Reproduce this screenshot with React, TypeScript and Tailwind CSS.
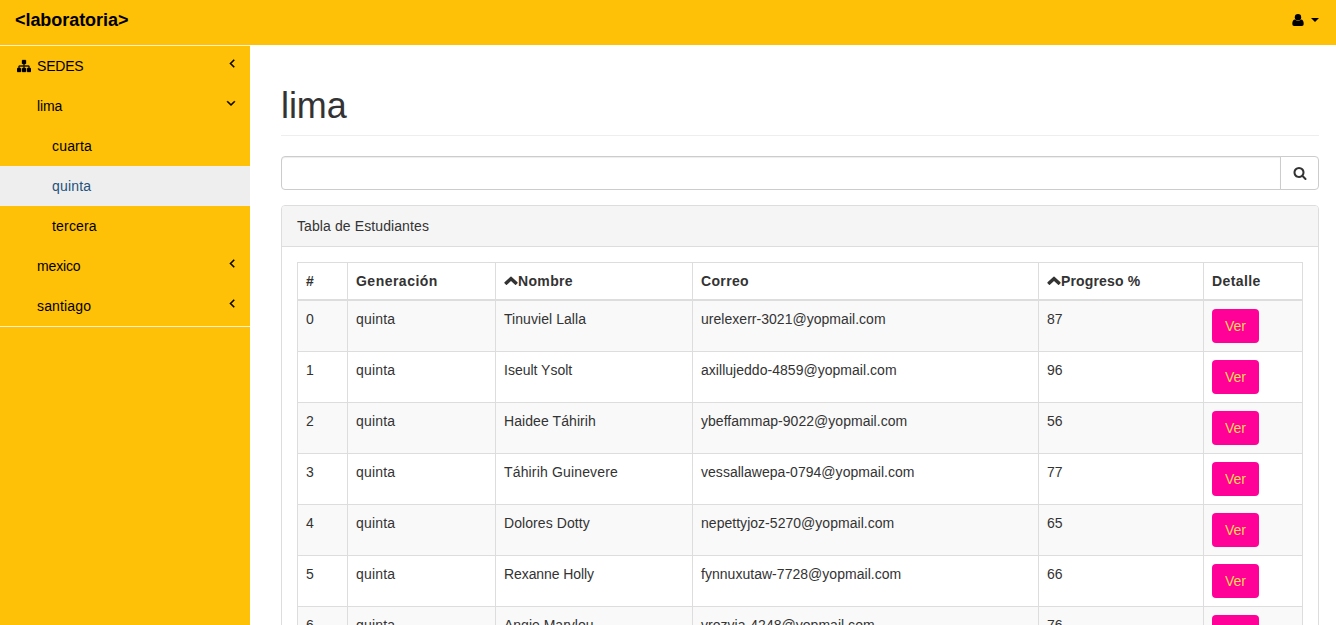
import React from 'react';

type IconProps = { className?: string };

const icon = (d: string) =>
  function Icon({ className = '' }: IconProps) {
    return (
      <svg viewBox="0 0 1792 1792" fill="currentColor" stroke="currentColor" aria-hidden="true" className={`h-[14px] w-[14px] shrink-0 ${className}`}>
        <path d={d} />
      </svg>
    );
  };

const Sitemap = icon(
  'M1792 1248v320q0 40-28 68t-68 28h-320q-40 0-68-28t-28-68v-320q0-40 28-68t68-28h96v-192h-512v192h96q40 0 68 28t28 68v320q0 40-28 68t-68 28h-320q-40 0-68-28t-28-68v-320q0-40 28-68t68-28h96v-192h-512v192h96q40 0 68 28t28 68v320q0 40-28 68t-68 28h-320q-40 0-68-28t-28-68v-320q0-40 28-68t68-28h96v-192q0-52 38-90t90-38h512v-192h-96q-40 0-68-28t-28-68v-320q0-40 28-68t68-28h320q40 0 68 28t28 68v320q0 40-28 68t-68 28h-96v192h512q52 0 90 38t38 90v192h96q40 0 68 28t28 68z',
);
const Search = icon(
  'M1216 832q0-185-131.500-316.500t-316.500-131.500-316.500 131.500-131.500 316.500 131.500 316.500 316.500 131.500 316.500-131.500 131.500-316.500zm512 832q0 52-38 90t-90 38q-54 0-90-38l-343-342q-179 124-399 124-143 0-273.500-55.500t-225-150-150-225-55.500-273.500 55.500-273.500 150-225 225-150 273.500-55.500 273.500 55.500 225 150 150 225 55.500 273.500q0 220-124 399l343 343q37 37 37 90z',
);
const AngleLeft = icon(
  'M1203 544q0 13-10 23l-393 393 393 393q10 10 10 23t-10 23l-50 50q-10 10-23 10t-23-10l-466-466q-10-10-10-23t10-23l466-466q10-10 23-10t23 10l50 50q10 10 10 23z',
);
const AngleDown = icon(
  'M1395 736q0 13-10 23l-466 466q-10 10-23 10t-23-10l-466-466q-10-10-10-23t10-23l50-50q10-10 23-10t23 10l393 393 393-393q10-10 23-10t23 10l50 50q10 10 10 23z',
);

function User() {
  return (
    <svg viewBox="0 0 12 12" fill="currentColor" aria-hidden="true" className="h-3 w-3 shrink-0">
      <circle cx="6" cy="3.200" r="3.200" />
      <path d="M3 5.500Q6 8.300 9 5.500 11.700 5.700 11.700 10 11.700 12 9.900 12H2.100Q.300 12 .300 10 .300 5.700 3 5.500z" />
    </svg>
  );
}

function SortUp() {
  return (
    <svg viewBox="0 0 14 14" fill="currentColor" aria-hidden="true" className="h-[14px] w-[14px] shrink-0">
      <path d="M6.500 2.700q.5-.4 1 0l6 5.600q.4.400 0 .9l-1.500 1.500q-.5.400-.9 0L7 7l-4.100 3.700q-.4.400-.9 0L.500 9.200q-.4-.5 0-.9z" />
    </svg>
  );
}

const menu = [
  { label: 'SEDES', pad: 'pl-[17px]', root: true, arrow: 'left', track: 'tracking-[-0.2px]' },
  { label: 'lima', pad: 'pl-[37px]', arrow: 'down', track: 'tracking-[-0.15px]' },
  { label: 'cuarta', pad: 'pl-[52px]', track: 'tracking-[0.18px]' },
  { label: 'quinta', pad: 'pl-[52px]', active: true, track: 'tracking-[0.18px]' },
  { label: 'tercera', pad: 'pl-[52px]', track: 'tracking-[0.18px]' },
  { label: 'mexico', pad: 'pl-[37px]', arrow: 'left', track: 'tracking-[-0.15px]' },
  { label: 'santiago', pad: 'pl-[37px]', arrow: 'left', track: 'tracking-[0.15px]' },
];

const students = [
  ['Tinuviel Lalla', 'urelexerr-3021@yopmail.com', 87, 'tracking-[0.06px]'],
  ['Iseult Ysolt', 'axillujeddo-4859@yopmail.com', 96, 'tracking-normal'],
  ['Haidee Táhirih', 'ybeffammap-9022@yopmail.com', 56, 'tracking-[0.08px]'],
  ['Táhirih Guinevere', 'vessallawepa-0794@yopmail.com', 77, 'tracking-[0.16px]'],
  ['Dolores Dotty', 'nepettyjoz-5270@yopmail.com', 65, 'tracking-[0.08px]'],
  ['Rexanne Holly', 'fynnuxutaw-7728@yopmail.com', 66, 'tracking-[-0.08px]'],
  ['Angie Marylou', 'vrozvia-4248@yopmail.com', 76, 'tracking-normal'],
];

function Sidebar() {
  return (
    <nav className="w-[250px] shrink-0 bg-[#ffc107]">
      <ul className="border-y border-[#fff3cd] text-black">
        {menu.map((m) => (
          <li key={m.label} className={`flex h-10 items-start ${m.arrow === 'left' ? 'pr-[11px]' : 'pr-[12px]'} ${m.pad} ${m.active ? 'bg-[#eee] text-[#23527c]' : ''}`}>
            {m.root && <Sitemap className="mt-[13px] mr-[6px] stroke-[40px]" />}
            <span className={`flex-1 pt-[10px] ${m.track}`}>{m.label}</span>
            {m.arrow === 'left' && <AngleLeft className="mt-[10px] stroke-[70px]" />}
            {m.arrow === 'down' && <AngleDown className="mt-[10px] stroke-[70px]" />}
          </li>
        ))}
      </ul>
    </nav>
  );
}

function StudentTable() {
  const cell = 'border border-[#ddd] px-2 pb-0 align-top';
  const head = 'h-[37px] border border-b-2 border-[#ddd] px-2 py-0 text-left align-middle font-bold';
  return (
    <table className="w-[1006px] table-fixed border-collapse">
      <colgroup>
        <col className="w-[50px]" />
        <col className="w-[148px]" />
        <col className="w-[197px]" />
        <col className="w-[346px]" />
        <col className="w-[165px]" />
        <col className="w-[99px]" />
      </colgroup>
      <thead>
        <tr>
          <th className={head}>#</th>
          <th className={`${head} tracking-[0.48px]`}>Generación</th>
          <th className={`${head} tracking-[0.35px]`}><span className="flex items-center"><SortUp />Nombre</span></th>
          <th className={`${head} tracking-[0.35px]`}>Correo</th>
          <th className={`${head} tracking-[0.15px]`}><span className="flex items-center"><SortUp />Progreso %</span></th>
          <th className={`${head} tracking-[0.4px]`}>Detalle</th>
        </tr>
      </thead>
      <tbody>
        {students.map(([name, mail, progress, track], i) => (
          <tr key={mail} className="h-[51px] first:h-[52px] odd:bg-[#f9f9f9]">
            <td className={`${cell} pt-2`}>{i}</td>
            <td className={`${cell} pt-2 tracking-[0.18px]`}>quinta</td>
            <td className={`${cell} pt-2 ${track}`}>{name}</td>
            <td className={`${cell} pt-2 tracking-[0.03px]`}>{mail}</td>
            <td className={`${cell} pt-2`}>{progress}</td>
            <td className={`${cell} pt-2`}>
              <button className="block h-[34px] w-[47px] rounded bg-[#ff0099] text-center leading-5 text-[#ffdb4d]">Ver</button>
            </td>
          </tr>
        ))}
      </tbody>
    </table>
  );
}

export default function App() {
  return (
    <div className="flex h-[625px] w-[1336px] flex-col overflow-hidden bg-white font-['Liberation_Sans',Arial,sans-serif] text-[14px] leading-5 text-[#333]">
      <header className="flex h-[45px] shrink-0 items-start justify-between bg-[#ffc107] pr-[17px] pl-[15px] text-black">
        <span className="pt-[10px] text-[18px] font-bold tracking-[-0.05px]">&lt;laboratoria&gt;</span>
        <div className="flex items-center gap-[7px] pt-[14px]">
          <User />
          <svg viewBox="0 0 8 4" fill="currentColor" className="h-1 w-2"><path d="M0 0h8L4 4z" /></svg>
        </div>
      </header>
      <div className="flex min-h-0 flex-1">
        <Sidebar />
        <main className="min-w-0 flex-1 pr-[17px] pl-[31px]">
          <h1 className="mt-[41px] h-[50px] border-b border-[#eee] text-[36px] leading-[40px] tracking-[-0.1px]">lima</h1>
          <div className="mt-5 flex h-[34px]">
            <input aria-label="Buscar" className="min-w-0 flex-1 rounded-l border border-[#ccc] px-3 shadow-[inset_0_1px_1px_rgba(0,0,0,0.075)] outline-none" />
            <button aria-label="Buscar estudiante" className="-ml-px flex w-[39px] items-center justify-center rounded-r border border-[#ccc]">
              <Search />
            </button>
          </div>
          <section className="mt-[15px] rounded border border-[#ddd]">
            <h2 className="h-[41px] rounded-t-[3px] border-b border-[#ddd] bg-[#f5f5f5] px-[15px] pt-[10px] tracking-[0.1px]">Tabla de Estudiantes</h2>
            <div className="p-[15px]"><StudentTable /></div>
          </section>
        </main>
      </div>
    </div>
  );
}
